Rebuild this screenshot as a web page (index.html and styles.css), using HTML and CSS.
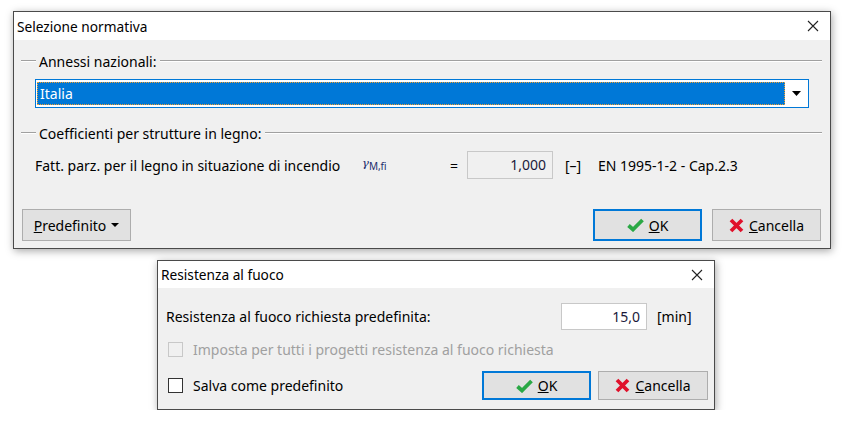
FILE: index.html
```html
<!DOCTYPE html>
<html lang="it">

<head>
    <meta charset="UTF-8">
    <title>Selezione normativa</title>
    <link rel="stylesheet" href="styles.css">
</head>

<body>
    <!-- Dialog: Selezione normativa -->
    <div class="dialog dialog-norm">
        <div class="titlebar">
            <span class="title">Selezione normativa</span>
            <span class="close">
                <svg width="12" height="12" viewBox="0 0 12 12"><path d="M1 1 L11 11 M11 1 L1 11" stroke="#222" stroke-width="1.1" fill="none"/></svg>
            </span>
        </div>
        <div class="content">
            <div class="group-head"><span class="dash"></span><span class="group-label">Annessi nazionali:</span><span class="rule"></span></div>
            <div class="combo">
                <div class="combo-value"><span>Italia</span></div>
                <div class="combo-arrow">
                    <svg width="9" height="5" viewBox="0 0 9 5"><path d="M0 0 H9 L4.5 5 Z" fill="#000"/></svg>
                </div>
            </div>

            <div class="group-head group-second"><span class="dash"></span><span class="group-label">Coefficienti per strutture in legno:</span><span class="rule"></span></div>
            <div class="coef-row">
                <span class="coef-label">Fatt. parz. per il legno in situazione di incendio</span>
                <span class="symbol">γ<sub>M,fi</sub></span>
                <span class="equals">=</span>
                <span class="field readonly">1,000</span>
                <span class="unit">[–]</span>
                <span class="ref">EN 1995-1-2 - Cap.2.3</span>
            </div>

            <div class="button-row">
                <button class="btn"><span><u>P</u>redefinito</span><svg width="8" height="4" viewBox="0 0 8 4"><path d="M0 0 H8 L4 4 Z" fill="#000"/></svg></button>
                <span class="spacer"></span>
                <button class="btn default">
                    <svg class="ico" width="17" height="14" viewBox="0 0 17 14"><path d="M1.5 7.5 L6 11.5 L15.5 2" stroke="#2aa845" stroke-width="3.8" fill="none"/></svg>
                    <span><u>O</u>K</span>
                </button>
                <button class="btn">
                    <svg class="ico" width="15" height="15" viewBox="0 0 15 15"><path d="M2 2 L13 13 M13 2 L2 13" stroke="#e0112b" stroke-width="3.8" fill="none"/></svg>
                    <span><u>C</u>ancella</span>
                </button>
            </div>
        </div>
    </div>

    <!-- Dialog: Resistenza al fuoco -->
    <div class="dialog dialog-fire">
        <div class="titlebar">
            <span class="title">Resistenza al fuoco</span>
            <span class="close">
                <svg width="12" height="12" viewBox="0 0 12 12"><path d="M1 1 L11 11 M11 1 L1 11" stroke="#222" stroke-width="1.1" fill="none"/></svg>
            </span>
        </div>
        <div class="content">
            <div class="fire-row">
                <span class="fire-label">Resistenza al fuoco richiesta predefinita:</span>
                <span class="field">15,0</span>
                <span class="unit min">[min]</span>
            </div>
            <label class="check disabled"><span class="box"></span>Imposta per tutti i progetti resistenza al fuoco richiesta</label>
            <div class="fire-bottom">
                <label class="check"><span class="box"></span>Salva come predefinito</label>
                <span class="spacer"></span>
                <button class="btn default">
                    <svg class="ico" width="17" height="14" viewBox="0 0 17 14"><path d="M1.5 7.5 L6 11.5 L15.5 2" stroke="#2aa845" stroke-width="3.8" fill="none"/></svg>
                    <span><u>O</u>K</span>
                </button>
                <button class="btn">
                    <svg class="ico" width="15" height="15" viewBox="0 0 15 15"><path d="M2 2 L13 13 M13 2 L2 13" stroke="#e0112b" stroke-width="3.8" fill="none"/></svg>
                    <span><u>C</u>ancella</span>
                </button>
            </div>
        </div>
    </div>
</body>

</html>
```

FILE: styles.css
```css
body {
    margin: 0;
    background: #fff;
    font-family: "Noto Sans", "Open Sans", sans-serif;
    font-size: 14px;
    color: #000;
}

.dialog {
    border: 1px solid #4a4a4a;
    background: #f0f0f0;
    box-shadow: 1px 2px 8px rgba(0, 0, 0, 0.35);
}

.dialog-norm {
    margin: 11px 0 0 13px;
    width: 816px;
}

.dialog-fire {
    margin: 11px 0 0 157px;
    width: 556px;
}

.titlebar {
    background: #fff;
    height: 28px;
    display: flex;
    align-items: center;
    padding-left: 3px;
    font-size: 13.7px;
}

.dialog-fire .titlebar {
    height: 27px;
}

.title {
    flex: 1;
}

.close {
    width: 30px;
    display: flex;
    justify-content: center;
    margin-right: 2px;
}

/* Group headers */
.group-head {
    display: flex;
    align-items: center;
    height: 20px;
    margin: 11px 8px 0 7px;
}

.group-second {
    margin-top: 15px;
}

.dash,
.rule {
    height: 0;
    border-top: 1px solid #a0a0a0;
    border-bottom: 1px solid #fff;
}

.dash {
    width: 15px;
}

.rule {
    flex: 1;
}

.group-label {
    padding: 0 4px 0 3px;
}

/* Combo */
.combo {
    margin: 8px 21px 0 21px;
    height: 27px;
    border: 1px solid #0078d7;
    background: #fff;
    display: flex;
    align-items: stretch;
}

.combo-value {
    flex: 1;
    margin: 2px 0 2px 1px;
    background: #0078d7;
    border: 1px dotted #f0a030;
    color: #fff;
    display: flex;
    align-items: center;
    padding-left: 2px;
}

.combo-arrow {
    width: 23px;
    display: flex;
    align-items: center;
    justify-content: center;
}

/* Coefficient row */
.coef-row {
    display: flex;
    align-items: center;
    margin: 8px 0 0 21px;
    height: 28px;
}

.coef-label {
    width: 327px;
}

.symbol {
    width: 88px;
    color: #1b2a6b;
    font-family: "DejaVu Serif", serif;
    font-style: italic;
    font-size: 11.5px;
}

.symbol sub {
    font-family: "Noto Sans", sans-serif;
    font-style: normal;
    font-size: 10px;
}

.equals {
    width: 17px;
}

.field {
    width: 86px;
    height: 28px;
    box-sizing: border-box;
    border: 1px solid #c8c8c8;
    background: #fff;
    text-align: right;
    padding-right: 6px;
    line-height: 26px;
    color: #1a1a3a;
}

.field.readonly {
    background: #f0f0f0;
}

.unit {
    margin-left: 12px;
    width: 33px;
}

/* Buttons */
.button-row,
.fire-bottom {
    display: flex;
    align-items: center;
    gap: 10px;
}

.button-row {
    margin: 30px 9px 7px 8px;
}

.spacer {
    flex: 1;
}

.btn {
    width: 109px;
    height: 32px;
    background: #e1e1e1;
    border: 1px solid #adadad;
    font: inherit;
    color: #000;
    display: flex;
    align-items: center;
    justify-content: center;
    gap: 5px;
    padding: 0;
}

.btn.default {
    border: 2px solid #0078d7;
}

.ico {
    display: block;
}

/* Fire dialog */
.fire-row {
    display: flex;
    align-items: center;
    margin: 15px 0 0 8px;
    height: 27px;
}

.fire-label {
    width: 395px;
}

.fire-row .field {
    height: 27px;
    line-height: 25px;
}

.min {
    margin-left: 10px;
}

.check {
    display: flex;
    align-items: center;
    height: 20px;
    margin-left: 10px;
}

.check .box {
    width: 13px;
    height: 13px;
    border: 1px solid #333;
    background: #fff;
    margin-right: 10px;
}

.check.disabled {
    color: #a0a0a0;
    margin-top: 9px;
}

.check.disabled .box {
    border-color: #c8c8c8;
    background: #f0f0f0;
}

.fire-bottom {
    margin: 12px 6px 9px 0;
}

.fire-bottom .btn {
    height: 29px;
}

.fire-bottom .btn:last-child {
    width: 110px;
}

.fire-bottom .btn.default {
    margin-right: -3px;
}
```
